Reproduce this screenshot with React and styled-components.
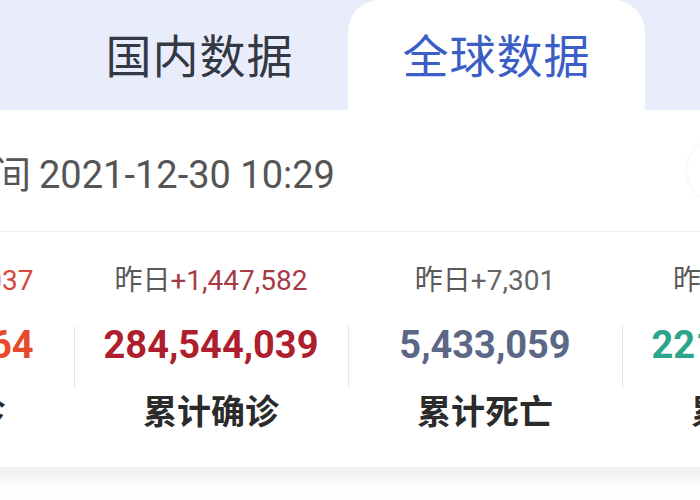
import React from 'react';
import styled, { createGlobalStyle } from 'styled-components';

const GlobalStyle = createGlobalStyle`
  html, body {
    margin: 0;
    padding: 0;
    background: #ffffff;
    overflow: hidden;
  }
  body {
    font-family: Roboto, "Noto Sans CJK SC", "Noto Sans", sans-serif;
  }
`;

const Viewport = styled.div`
  width: 700px;
  height: 500px;
  overflow: hidden;
  background: #fdfdfe;
`;

const Sheet = styled.div`
  width: 1096px;
  margin-left: -200px;
  background: #ffffff;
`;

const TabBar = styled.div`
  height: 110px;
  display: flex;
  justify-content: center;
  background: #e9edfb;
`;

const Tab = styled.div`
  width: 297px;
  display: flex;
  align-items: center;
  justify-content: center;
  padding-bottom: 4px;
  font-family: "Noto Sans CJK SC", sans-serif;
  font-size: 46px;
  letter-spacing: 1px;
  color: ${props => props.active ? '#3a5ec6' : '#333942'};
  background: ${props => props.active ? '#ffffff' : 'transparent'};
  border-radius: 32px 32px 0 0;
`;

const TimeRow = styled.div`
  height: 121px;
  display: flex;
  align-items: center;
  justify-content: space-between;
  padding: 0 148px 0 79px;
  border-bottom: 1px solid #ededef;
`;

const UpdateTime = styled.div`
  font-size: 38px;
  color: #555555;
  padding-top: 2px;

  span {
    margin-right: 8px;
  }
`;

const RefreshButton = styled.div`
  width: 60px;
  height: 60px;
  border-radius: 50%;
  border: 1px solid #f5f5f7;
  box-shadow: 0 0 5px rgba(0, 0, 0, 0.03);
`;

const StatsRow = styled.div`
  display: grid;
  grid-template-columns: repeat(4, 274px);
  height: 235px;
`;

const StatCell = styled.div`
  position: relative;
  display: flex;
  flex-direction: column;
  align-items: center;
  padding-top: 32px;

  &::before {
    content: '';
    display: ${props => props.first ? 'none' : 'block'};
    position: absolute;
    left: 0;
    top: 94px;
    height: 62px;
    border-left: 1px solid #e6e6e8;
  }
`;

const Delta = styled.div`
  font-size: 28px;
  line-height: 34px;
  color: #5a5a5a;
  white-space: nowrap;

  b {
    font-weight: 400;
    color: ${props => props.color};
  }
`;

const Total = styled.div`
  margin-top: 24px;
  font-size: 38px;
  line-height: 46px;
  font-weight: 700;
  color: ${props => props.color};
  white-space: nowrap;
`;

const Label = styled.div`
  margin-top: 20px;
  font-family: "Noto Sans CJK SC", sans-serif;
  font-size: 34px;
  line-height: 44px;
  font-weight: 700;
  color: #2b2b2b;
  white-space: nowrap;
`;

const ShadowBand = styled.div`
  height: 17px;
  background: linear-gradient(#eeeef1, #f6f6f8 70%, #fbfbfc);
`;

const stats = [
  { label: '现有确诊', delta: '+1,021,037', total: '57,472,764', deltaColor: '#d9463a', color: '#e8492a' },
  { label: '累计确诊', delta: '+1,447,582', total: '284,544,039', deltaColor: '#a83a46', color: '#ae1f2d' },
  { label: '累计死亡', delta: '+7,301', total: '5,433,059', deltaColor: '#666666', color: '#5b6786' },
  { label: '累计治愈', delta: '+419,244', total: '221,638,216', deltaColor: '#4d9c86', color: '#2ba58b' },
];

export default function App() {
  return (
    <>
      <GlobalStyle />
      <Viewport>
        <Sheet>
          <TabBar>
            <Tab>国内数据</Tab>
            <Tab active>全球数据</Tab>
          </TabBar>
          <TimeRow>
            <UpdateTime><span>更新时间</span>2021-12-30 10:29</UpdateTime>
            <RefreshButton />
          </TimeRow>
          <StatsRow>
            {stats.map((s, i) => (
              <StatCell key={s.label} first={i === 0}>
                <Delta color={s.deltaColor}>昨日<b>{s.delta}</b></Delta>
                <Total color={s.color}>{s.total}</Total>
                <Label>{s.label}</Label>
              </StatCell>
            ))}
          </StatsRow>
        </Sheet>
        <ShadowBand />
      </Viewport>
    </>
  );
}
